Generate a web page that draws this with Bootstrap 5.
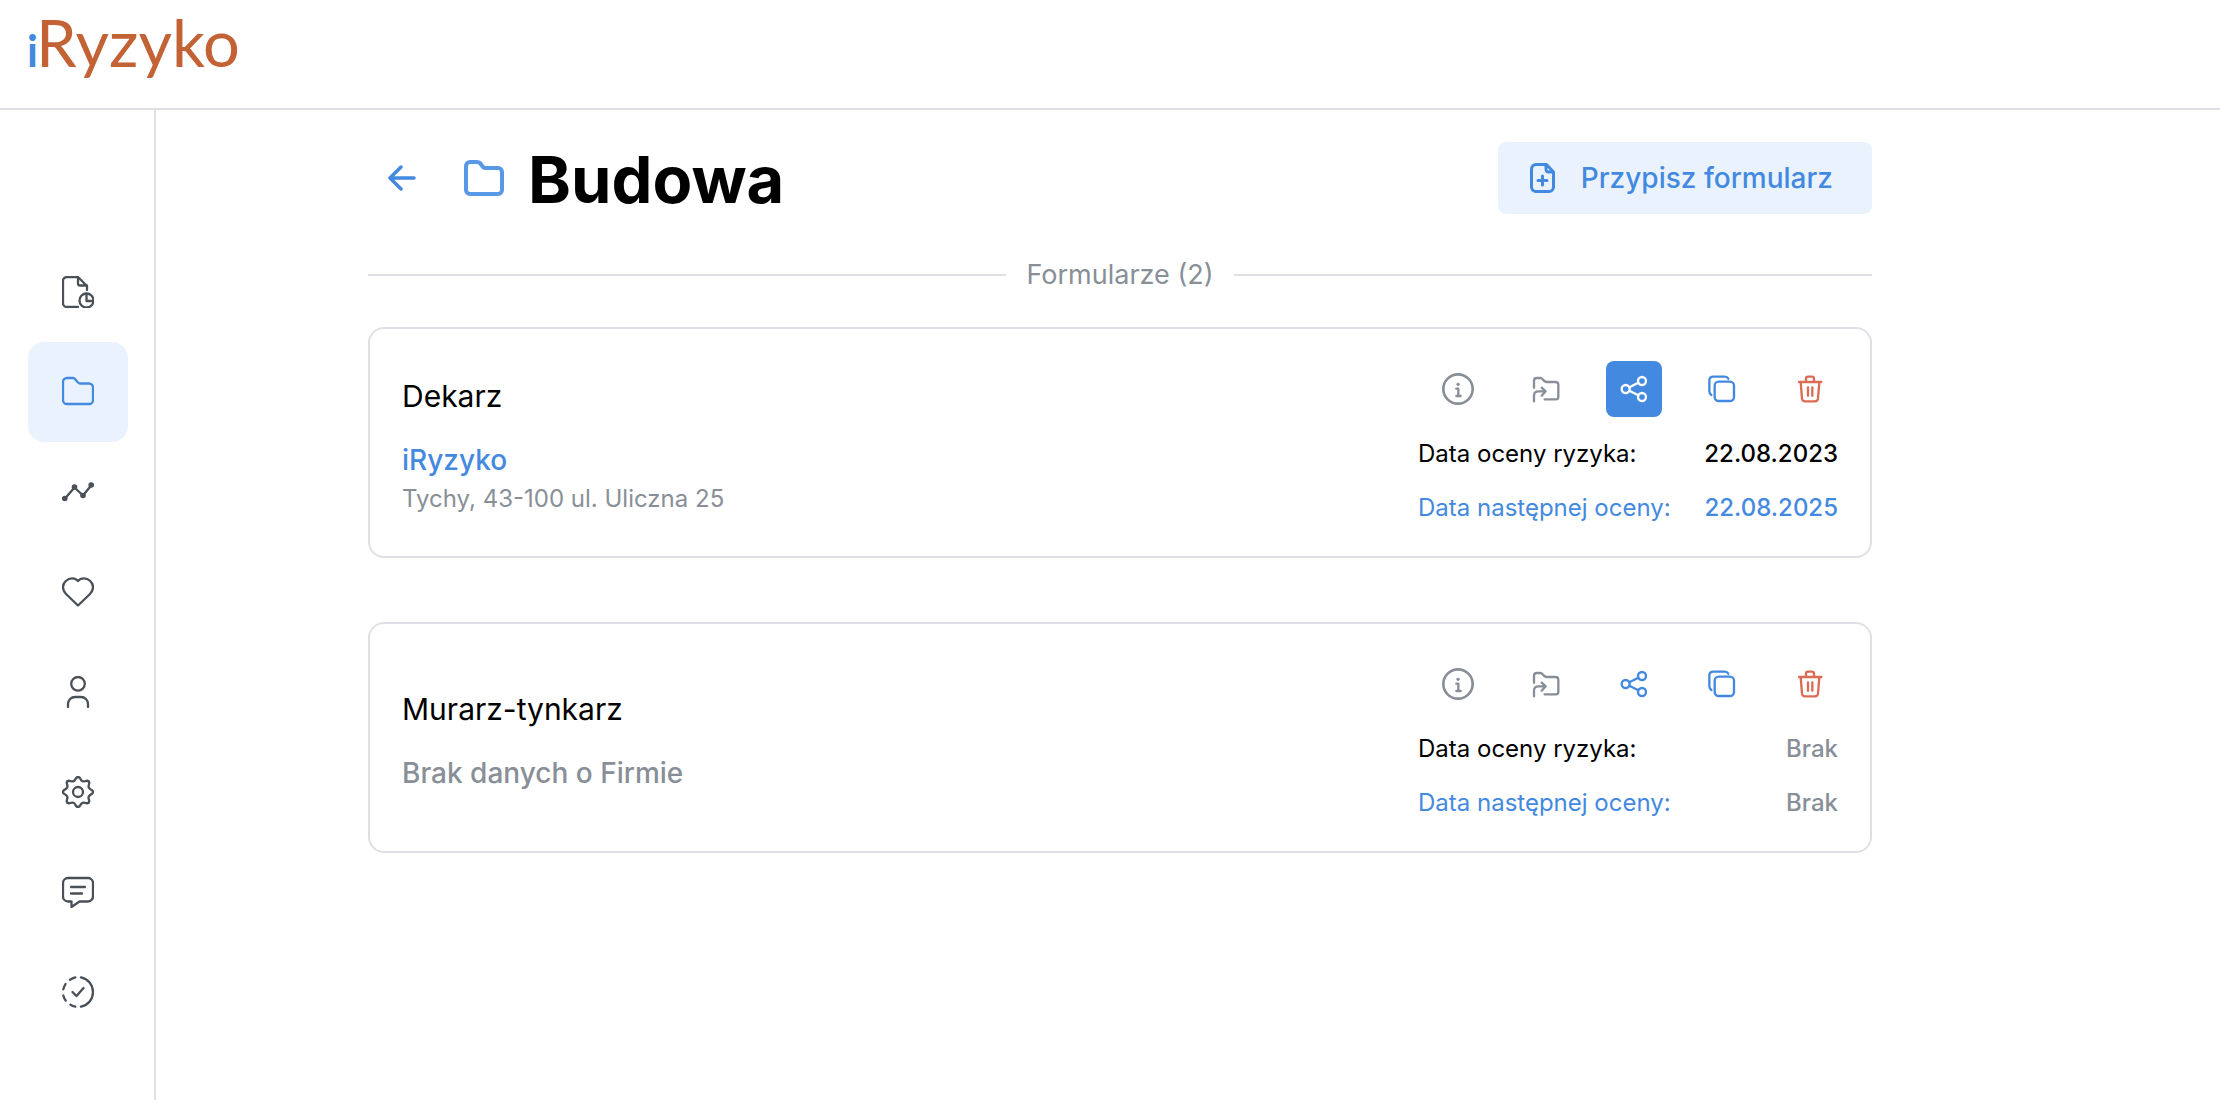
<!DOCTYPE html>
<html lang="pl">
<head>
<meta charset="utf-8">
<meta name="viewport" content="width=device-width, initial-scale=1">
<title>iRyzyko – Budowa</title>
<link href="https://cdn.jsdelivr.net/npm/bootstrap@5.3.0/dist/css/bootstrap.min.css" rel="stylesheet">
<style>
:root { --line: #dee0e6; --blue: #4489e0; --pale: #eaf3fd; --mute: #888f97; --ink: #495057; --red: #dc6b55; }
body { font-family: Inter, "Liberation Sans", sans-serif; font-size: 24px; color: #000; background: #fff; }
svg { display: block; fill: none; stroke: currentColor; stroke-linecap: round; stroke-linejoin: round; }
.topbar { height: 110px; border-bottom: 2px solid var(--line); padding: 2px 27px; }
.brand { font-family: Lato, sans-serif; font-size: 65px; line-height: 80px; color: #c26235; text-decoration: none; }
.brand span { font-size: 43px; font-weight: 700; color: var(--blue); margin-right: -2px; }
.side { width: 156px; border-right: 2px solid var(--line); padding: 132px 26px 0 28px; }
.side a { height: 100px; border-radius: 16px; color: var(--ink); }
.side a.active { background: var(--pale); color: var(--blue); }
.side svg { stroke-width: 2.3; }
.content { padding: 32px 32px 32px 212px; }
.inner { max-width: 1504px; }
.back { padding: 20px; color: var(--blue); background: none; border: 0; margin-right: 28px; }
.title-folder { color: #5998e7; margin-right: 24px; }
.page-title { font-size: 65px; line-height: 72px; font-weight: 700; padding-top: 4px; }
.title-row { height: 72px; }
.assign { height: 72px; padding: 0 38px 0 31px; gap: 26px; border-radius: 8px; background: var(--pale); color: var(--blue); font-size: 28px; font-weight: 500; }
.assign:hover { background: #dcebfc; color: var(--blue); }
.divider { margin: 40px 0 32px; gap: 20px; color: var(--mute); font-size: 27px; line-height: 41px; }
.divider::before, .divider::after { content: ""; flex: 1; height: 2px; background: var(--line); }
.forms { gap: 64px; }
.form-card { border: 2px solid var(--line); border-radius: 16px; padding: 32px; }
.form-about { padding-top: 2px; }
.form-name { font-size: 30px; line-height: 50px; margin-bottom: 18px; font-weight: 400; }
.firm { font-size: 28px; line-height: 42px; font-weight: 500; }
.address { line-height: 36px; }
.meta { width: 420px; }
.actions { gap: 32px; margin-bottom: 20px; }
.act { width: 56px; height: 56px; padding: 0; border: 0; border-radius: 8px; background: none; color: var(--mute); }
.act.blue, .blue { color: var(--blue); }
.act.red { color: var(--red); }
.act.on { background: var(--blue); color: #fff; }
.act svg { stroke-width: 7; }
.dates { gap: 21px; line-height: 33px; }
.dates dt { font-weight: 400; }
.dates dd { font-weight: 500; margin: 0; }
.mute { color: var(--mute); }
</style>
<script src="https://cdn.jsdelivr.net/npm/bootstrap@5.3.0/dist/js/bootstrap.bundle.min.js"></script>
</head>
<body class="d-flex flex-column min-vh-100">
<svg width="0" height="0" class="position-absolute" aria-hidden="true">
  <symbol id="i-info" viewBox="126 159 96 96"><circle cx="174" cy="207" r="44" stroke-width="8"/><circle cx="174" cy="193" r="4" fill="currentColor" stroke-width="2"/><path d="M169 206h6v22M169 228h13"/></symbol>
  <symbol id="i-move" viewBox="396 165 84 84"><path d="M402 203V182q0-8 8-8h11q4 0 7 4l6 6q3 2 6 2h27q8 0 8 8v36q0 8-8 8h-33M402 244v-17q0-13 13-13h21M425 203l12 11-12 13"/></symbol>
  <symbol id="i-share" viewBox="660 165 84 84"><circle cx="677" cy="207" r="12"/><circle cx="726" cy="183" r="12"/><circle cx="726" cy="231" r="12"/><path d="M688 202l27-14M688 212l27 14"/></symbol>
  <symbol id="i-copy" viewBox="924 165 84 84"><rect x="944" y="185" width="58" height="58" rx="12"/><path d="M934 225q-6-4-6-12v-31q0-12 12-12h34q8 0 11 6"/></symbol>
  <symbol id="i-trash" viewBox="1188 165 84 84"><path d="M1197 186h67M1202 186l4 50q1 8 9 8h30q8 0 9-8l4-50M1218 185v-9q0-6 6-6h12q6 0 6 6v9M1224 202v25M1237 202v25"/></symbol>
</svg>
<header class="topbar"><a class="brand" href="#"><span>i</span>Ryzyko</a></header>
<div class="d-flex flex-grow-1">
  <nav class="side flex-shrink-0 d-flex flex-column" aria-label="Menu">
    <a href="#" class="d-flex align-items-center justify-content-center" aria-label="Formularze"><svg width="32" height="32" viewBox="0 0 32 32"><path d="M16 31H5a4 4 0 0 1-4-4V5a4 4 0 0 1 4-4h11l9 9v4M16 1v6.500a2 2 0 0 0 2 2h7"/><circle cx="24.500" cy="24.500" r="7"/><path d="M24.500 18v7h6"/></svg></a>
    <a href="#" class="active d-flex align-items-center justify-content-center" aria-label="Foldery"><svg width="32" height="32" viewBox="0 0 32 32"><path d="M5 2h6q1 0 2 1l3 3.500q1 1 2 1h9a4 4 0 0 1 4 4V24a4 4 0 0 1-4 4H5a4 4 0 0 1-4-4V6a4 4 0 0 1 4-4z"/></svg></a>
    <a href="#" class="d-flex align-items-center justify-content-center" aria-label="Statystyki"><svg width="32" height="32" viewBox="0 0 32 32"><path d="M3 22.500 12.500 11.500 21 19.500 29.500 9"/><g fill="currentColor" stroke="none"><circle cx="2.800" cy="22.500" r="2.800"/><circle cx="12.500" cy="11" r="2.800"/><circle cx="21" cy="19.500" r="2.800"/><circle cx="29.200" cy="9" r="2.800"/></g></svg></a>
    <a href="#" class="d-flex align-items-center justify-content-center" aria-label="Zdrowie"><svg width="32" height="32" viewBox="0 0 32 32"><path d="M16 29.500 4 18C0 14 0 8.500 3.800 5 7.500 1.500 13 1.500 16 5c3-3.500 8.500-3.500 12.200 0C32 8.500 32 14 28 18z"/></svg></a>
    <a href="#" class="d-flex align-items-center justify-content-center" aria-label="Profil"><svg width="32" height="32" viewBox="0 0 32 32"><circle cx="16" cy="7.800" r="6.800"/><path d="M6 31v-3a7 7 0 0 1 7-7h6a7 7 0 0 1 7 7v3"/></svg></a>
    <a href="#" class="d-flex align-items-center justify-content-center" aria-label="Ustawienia"><svg width="32" height="32" viewBox="0 0 32 32"><circle cx="16" cy="16" r="5"/><path id="tooth" d="M16 1C19 1 17.600 4 20.500 5.200 23.400 6.400 24.600 3.400 26.600 5.400"/><use href="#tooth" transform="rotate(45 16 16)"/><use href="#tooth" transform="rotate(90 16 16)"/><use href="#tooth" transform="rotate(135 16 16)"/><use href="#tooth" transform="rotate(180 16 16)"/><use href="#tooth" transform="rotate(225 16 16)"/><use href="#tooth" transform="rotate(270 16 16)"/><use href="#tooth" transform="rotate(315 16 16)"/></svg></a>
    <a href="#" class="d-flex align-items-center justify-content-center" aria-label="Wiadomości"><svg width="32" height="32" viewBox="0 0 32 32"><path d="M9.500 25.500H6a5 5 0 0 1-5-5V7a5 5 0 0 1 5-5h20a5 5 0 0 1 5 5v13.500a5 5 0 0 1-5 5h-8.500L9.500 31zM9 11h14M9 17.500h11"/></svg></a>
    <a href="#" class="d-flex align-items-center justify-content-center" aria-label="Zadania"><svg width="32" height="32" viewBox="0 0 32 32"><path d="M19 1.300A15 15 0 0 1 19 30.700M8 3.700Q10.500 2 13.300 1.300M1.300 13.300Q2 10.500 3.500 8M1.300 19.500Q2 22.300 3.700 24.500M8.500 28.700Q10.700 30.200 13.300 30.700M10.500 16l4 4 7-8"/></svg></a>
  </nav>
  <main class="content flex-grow-1">
    <div class="inner">
      <div class="title-row d-flex align-items-center justify-content-between">
        <div class="d-flex align-items-center">
          <button type="button" class="back" aria-label="Wstecz"><svg width="28" height="32" viewBox="0 0 28 32"><path stroke-width="3.500" d="M26 16H2M13 5 2 16l11 11"/></svg></button>
          <svg class="title-folder" width="40" height="36" viewBox="0 0 40 36"><path stroke-width="4" d="M6 2h7q2 0 3 1l3 4q1 1 3 1h12a4 4 0 0 1 4 4v18a4 4 0 0 1-4 4H6a4 4 0 0 1-4-4V6a4 4 0 0 1 4-4z"/></svg>
          <h1 class="page-title mb-0">Budowa</h1>
        </div>
        <button type="button" class="assign btn d-flex align-items-center"><svg width="25" height="30" viewBox="0 0 25 30"><path stroke-width="3" d="M6 1.500h10.500l7 7.500v15a4.500 4.500 0 0 1-4.500 4.500H6A4.500 4.500 0 0 1 1.500 24V6A4.500 4.500 0 0 1 6 1.500zM16 2v4q0 3 3 3h4M12.500 13v9M8 17.500h9"/></svg>Przypisz formularz</button>
      </div>
      <div class="divider d-flex align-items-center">Formularze (2)</div>
      <div class="forms d-flex flex-column">
        <article class="form-card d-flex align-items-center justify-content-between">
          <div class="form-about">
            <h2 class="form-name">Dekarz</h2>
            <div class="firm blue">iRyzyko</div>
            <div class="address mute">Tychy, 43-100 ul. Uliczna 25</div>
          </div>
          <div class="meta">
            <div class="actions d-flex justify-content-end">
              <button type="button" class="act d-flex align-items-center justify-content-center" aria-label="Informacje"><svg width="32" height="32"><use href="#i-info"/></svg></button>
              <button type="button" class="act d-flex align-items-center justify-content-center" aria-label="Przenieś"><svg width="28" height="28"><use href="#i-move"/></svg></button>
              <button type="button" class="act on d-flex align-items-center justify-content-center" aria-label="Udostępnij"><svg width="28" height="28"><use href="#i-share"/></svg></button>
              <button type="button" class="act blue d-flex align-items-center justify-content-center" aria-label="Kopiuj"><svg width="28" height="28"><use href="#i-copy"/></svg></button>
              <button type="button" class="act red d-flex align-items-center justify-content-center" aria-label="Usuń"><svg width="28" height="28"><use href="#i-trash"/></svg></button>
            </div>
            <dl class="dates d-flex flex-column mb-0">
              <div class="d-flex justify-content-between"><dt>Data oceny ryzyka:</dt><dd>22.08.2023</dd></div>
              <div class="d-flex justify-content-between blue"><dt>Data następnej oceny:</dt><dd>22.08.2025</dd></div>
            </dl>
          </div>
        </article>
        <article class="form-card d-flex align-items-center justify-content-between">
          <div class="form-about">
            <h2 class="form-name">Murarz-tynkarz</h2>
            <div class="firm mute">Brak danych o Firmie</div>
          </div>
          <div class="meta">
            <div class="actions d-flex justify-content-end">
              <button type="button" class="act d-flex align-items-center justify-content-center" aria-label="Informacje"><svg width="32" height="32"><use href="#i-info"/></svg></button>
              <button type="button" class="act d-flex align-items-center justify-content-center" aria-label="Przenieś"><svg width="28" height="28"><use href="#i-move"/></svg></button>
              <button type="button" class="act blue d-flex align-items-center justify-content-center" aria-label="Udostępnij"><svg width="28" height="28"><use href="#i-share"/></svg></button>
              <button type="button" class="act blue d-flex align-items-center justify-content-center" aria-label="Kopiuj"><svg width="28" height="28"><use href="#i-copy"/></svg></button>
              <button type="button" class="act red d-flex align-items-center justify-content-center" aria-label="Usuń"><svg width="28" height="28"><use href="#i-trash"/></svg></button>
            </div>
            <dl class="dates d-flex flex-column mb-0">
              <div class="d-flex justify-content-between"><dt>Data oceny ryzyka:</dt><dd class="mute">Brak</dd></div>
              <div class="d-flex justify-content-between blue"><dt>Data następnej oceny:</dt><dd class="mute">Brak</dd></div>
            </dl>
          </div>
        </article>
      </div>
    </div>
  </main>
</div>
</body>
</html>
